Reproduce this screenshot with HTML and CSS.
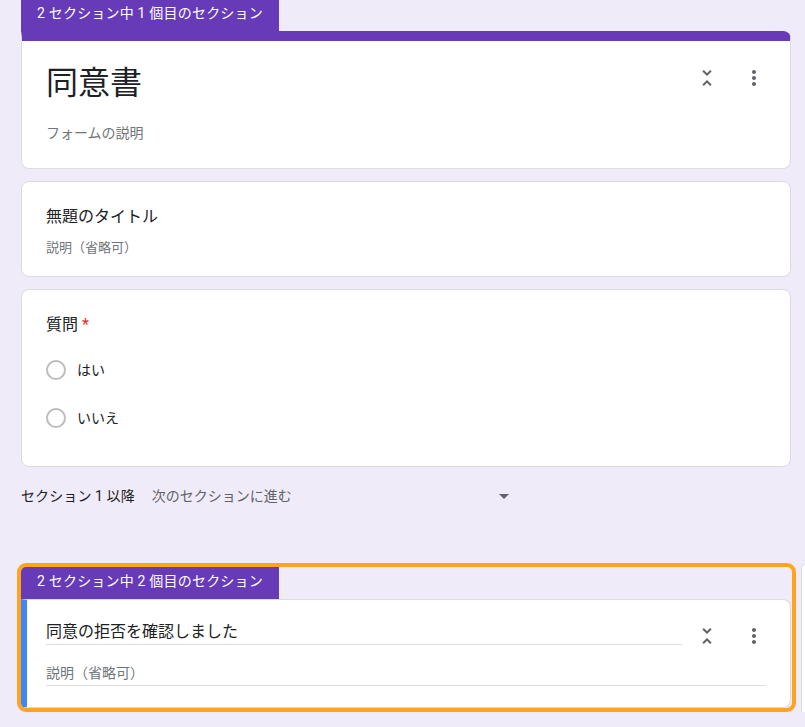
FILE: index.html
```html
<!DOCTYPE html>
<html lang="ja">
<head>
<meta charset="utf-8">
<title>同意書</title>
<link rel="stylesheet" href="styles.css">
</head>
<body>
<div class="page">
  <section class="section first">
    <div class="tab">2 セクション中 1 個目のセクション</div>
    <div class="card header-card">
      <div class="head-row">
        <div class="form-title">同意書</div>
        <div class="actions">
          <svg class="icon" viewBox="0 0 24 24"><path d="M7.41 18.59L8.83 20 12 16.83 15.17 20l1.41-1.41L12 14l-4.59 4.59zm9.18-13.18L15.17 4 12 7.17 8.83 4 7.41 5.410 12 10l4.59-4.59z"/></svg>
          <svg class="icon" viewBox="0 0 24 24"><path d="M12 8c1.1 0 2-.9 2-2s-.9-2-2-2-2 .9-2 2 .9 2 2 2zm0 2c-1.1 0-2 .9-2 2s.9 2 2 2 2-.9 2-2-.9-2-2-2zm0 6c-1.1 0-2 .9-2 2s.9 2 2 2 2-.9 2-2-.9-2-2-2z"/></svg>
        </div>
      </div>
      <div class="form-desc">フォームの説明</div>
    </div>

    <div class="card item-card">
      <div class="item-title">無題のタイトル</div>
      <div class="item-desc">説明（省略可）</div>
    </div>

    <div class="card q-card">
      <div class="q-title">質問<span class="req">*</span></div>
      <div class="option"><span class="radio"></span><span class="opt-label">はい</span></div>
      <div class="option"><span class="radio"></span><span class="opt-label">いいえ</span></div>
    </div>

    <div class="after-row">
      <span class="after-label">セクション 1 以降</span>
      <div class="dropdown">
        <span class="dd-value">次のセクションに進む</span>
        <svg class="icon" viewBox="0 0 24 24"><path d="M7 10l5 5 5-5z"/></svg>
      </div>
    </div>
  </section>

  <section class="section selected">
    <div class="tab">2 セクション中 2 個目のセクション</div>
    <div class="card sec-card">
      <div class="head-row">
        <div class="field title-field">同意の拒否を確認しました</div>
        <div class="actions">
          <svg class="icon" viewBox="0 0 24 24"><path d="M7.41 18.59L8.83 20 12 16.83 15.17 20l1.41-1.41L12 14l-4.59 4.59zm9.18-13.18L15.17 4 12 7.17 8.83 4 7.41 5.41 12 10l4.59-4.59z"/></svg>
          <svg class="icon" viewBox="0 0 24 24"><path d="M12 8c1.1 0 2-.9 2-2s-.9-2-2-2-2 .9-2 2 .9 2 2 2zm0 2c-1.1 0-2 .9-2 2s.9 2 2 2 2-.9 2-2-.9-2-2-2zm0 6c-1.1 0-2 .9-2 2s.9 2 2 2 2-.9 2-2-.9-2-2-2z"/></svg>
        </div>
      </div>
      <div class="field desc-field">説明（省略可）</div>
    </div>
  </section>

  <div class="sidebar"></div>
</div>
</body>
</html>
```

FILE: styles.css
```css
html, body {
  margin: 0;
  padding: 0;
  overflow: hidden;
}
body {
  background: #f0ebf8;
  font-family: Roboto, "Noto Sans CJK JP", sans-serif;
  color: #202124;
}
.page {
  position: relative;
  width: 770px;
  padding-left: 21px;
}
.section.first {
  margin-top: -1px;
}
.tab {
  display: block;
  width: fit-content;
  height: 32px;
  box-sizing: border-box;
  padding: 0 16px;
  line-height: 28px;
  background: #673ab7;
  color: #ffffff;
  font-size: 14px;
  font-weight: 400;
  letter-spacing: 0.2px;
}
.card {
  background: #ffffff;
  border: 1px solid #dadce0;
  border-radius: 8px;
  box-sizing: border-box;
}
.header-card {
  border-top: 10px solid #673ab7;
  border-radius: 0 8px 8px 8px;
  padding: 22px 24px 25px 24px;
}
.head-row {
  display: flex;
  align-items: flex-start;
}
.form-title {
  flex: 1;
  font-size: 32px;
  line-height: 40px;
  color: #202124;
}
.actions {
  display: flex;
  gap: 23px;
  margin-left: 13px;
  margin-top: 3px;
}
.icon {
  width: 24px;
  height: 24px;
  fill: #5f6368;
  display: block;
}
.form-desc {
  margin-top: 20px;
  font-size: 14px;
  line-height: 20px;
  color: #70757a;
}
.item-card {
  margin-top: 12px;
  padding: 23px 24px 19px 24px;
}
.item-title {
  font-size: 16px;
  line-height: 24px;
  color: #202124;
}
.item-desc {
  margin-top: 10px;
  font-size: 13px;
  line-height: 18px;
  color: #70757a;
}
.q-card {
  margin-top: 12px;
  padding: 23px 24px 24px 24px;
}
.q-title {
  font-size: 16px;
  line-height: 24px;
  color: #202124;
  margin-bottom: 9px;
}
.req {
  color: #d93025;
  margin-left: 4px;
}
.option {
  display: flex;
  align-items: center;
  height: 48px;
}
.radio {
  width: 20px;
  height: 20px;
  box-sizing: border-box;
  border: 2px solid #bdbdbd;
  border-radius: 50%;
}
.opt-label {
  margin-left: 11px;
  font-size: 14px;
  line-height: 20px;
  color: #202124;
}
.after-row {
  display: flex;
  align-items: center;
  height: 24px;
  margin-top: 17px;
  font-size: 14px;
  line-height: 20px;
}
.after-label {
  color: #202124;
  letter-spacing: 0.1px;
}
.dropdown {
  display: flex;
  align-items: center;
  justify-content: space-between;
  width: 364px;
  margin-left: 17px;
  color: #5f6368;
}
.section.selected {
  width: 770px;
  margin-top: 55px;
  margin-left: -4px;
  border: 4px solid #ffa41c;
  border-radius: 9px;
  padding-right: 1px;
  overflow: hidden;
}
.sec-card {
  border-left: 6px solid #4285f4;
  border-radius: 0 8px 8px 0;
  padding: 20px 24px 21px 19px;
}
.sec-card .actions {
  margin-top: 4px;
}
.field {
  border-bottom: 1px solid #dadce0;
}
.title-field {
  flex: 1;
  font-size: 16px;
  line-height: 24px;
  color: #202124;
}
.desc-field {
  margin-top: 15px;
  font-size: 14px;
  line-height: 20px;
  padding-bottom: 2px;
  color: #70757a;
}
.sidebar {
  position: absolute;
  left: 801px;
  top: 565px;
  width: 3px;
  height: 161px;
  background: #ffffff;
  border: 1px solid #dadce0;
  border-right: none;
  border-radius: 8px 0 0 0;
}
```
